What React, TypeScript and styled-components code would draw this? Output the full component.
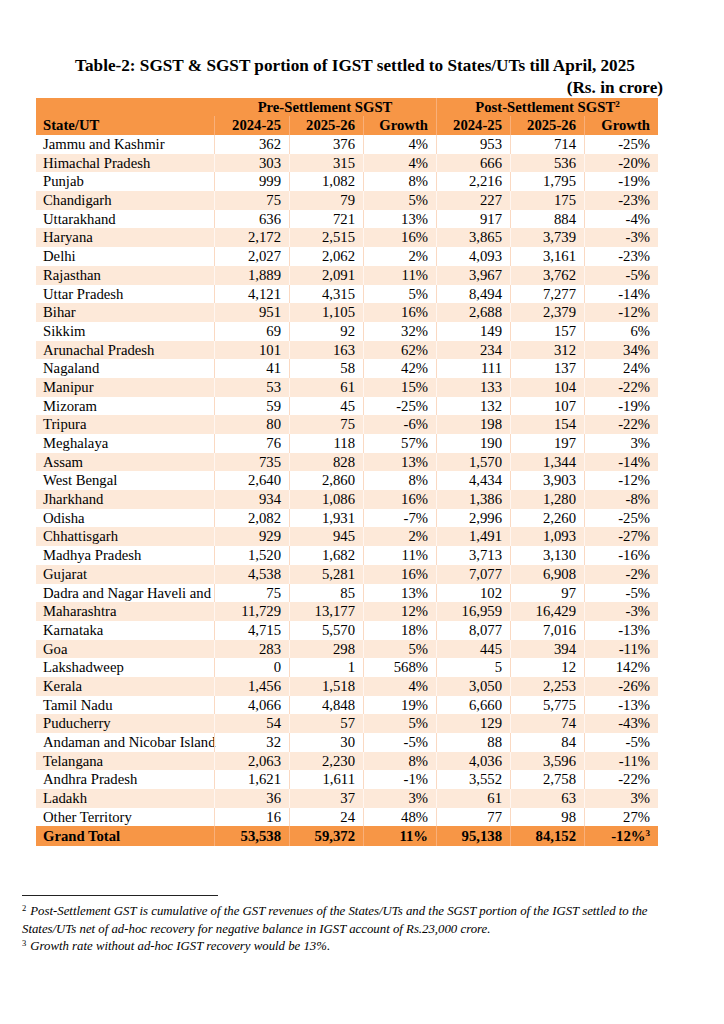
import React from "react";
import styled, { createGlobalStyle } from "styled-components";

const GlobalStyle = createGlobalStyle`
  html, body { margin: 0; padding: 0; background: #ffffff; }
  body { font-family: "Liberation Serif", "Times New Roman", serif; color: #000; }
`;

const ORANGE = "#F79646";
const PEACH = "#FDE9D9";
const COLS = "178px 75px 74px 73px 74px 74px 74px";

const Page = styled.div`
  width: 724px;
  min-height: 1024px;
  box-sizing: border-box;
  padding-top: 55px;
`;

const Title = styled.h1`
  margin: 0;
  font-size: 17.2px;
  line-height: 21.5px;
  font-weight: bold;
  text-align: center;
  padding-right: 14px;
`;

const Unit = styled.div`
  font-size: 17.2px;
  line-height: 21.5px;
  font-weight: bold;
  text-align: right;
  padding-right: 61px;
`;

const Table = styled.div`
  margin-left: 36px;
  width: 622px;
  font-size: 14.7px;
`;

const GroupRow = styled.div`
  display: grid;
  grid-template-columns: 178px 222px 222px;
  height: 18px;
  line-height: 18px;
  background: ${ORANGE};
  font-weight: bold;
`;

const GroupCell = styled.div<{ $sep?: boolean }>`
  text-align: center;
  border-left: ${(p) => (p.$sep ? "1px solid #F9B07A" : "none")};
  white-space: nowrap;
`;

const Row = styled.div<{ $bg: string; $line: string; $h: number; $bold?: boolean }>`
  display: grid;
  grid-template-columns: ${COLS};
  height: ${(p) => p.$h}px;
  line-height: ${(p) => p.$h}px;
  background: ${(p) => p.$bg};
  font-weight: ${(p) => (p.$bold ? "bold" : "normal")};
  & > div + div { border-left: 1px solid ${(p) => p.$line}; }
`;

const Cell = styled.div<{ $align?: "left" | "right" }>`
  text-align: ${(p) => p.$align ?? "right"};
  padding: ${(p) => (p.$align === "left" ? "0 0 0 7px" : "0 8px 0 0")};
  white-space: nowrap;
  overflow: visible;
`;

const Sup = styled.sup`
  font-size: 0.62em;
  line-height: 0;
  vertical-align: 0.55em;
`;

const Notes = styled.div`
  margin-top: 49px;
  padding-left: 22px;
  width: 630px;
`;

const Rule = styled.div`
  width: 196px;
  height: 1px;
  background: #222;
  margin-bottom: 7px;
`;

const Note = styled.p`
  margin: 0;
  font-size: 12.8px;
  line-height: 17.5px;
  font-style: italic;
`;

const NoteMark = styled.sup`
  font-style: normal;
  font-size: 8.5px;
  line-height: 0;
  vertical-align: 0.5em;
  margin-right: 4px;
`;

const rows: string[][] = [
  ["Jammu and Kashmir", "362", "376", "4%", "953", "714", "-25%"],
  ["Himachal Pradesh", "303", "315", "4%", "666", "536", "-20%"],
  ["Punjab", "999", "1,082", "8%", "2,216", "1,795", "-19%"],
  ["Chandigarh", "75", "79", "5%", "227", "175", "-23%"],
  ["Uttarakhand", "636", "721", "13%", "917", "884", "-4%"],
  ["Haryana", "2,172", "2,515", "16%", "3,865", "3,739", "-3%"],
  ["Delhi", "2,027", "2,062", "2%", "4,093", "3,161", "-23%"],
  ["Rajasthan", "1,889", "2,091", "11%", "3,967", "3,762", "-5%"],
  ["Uttar Pradesh", "4,121", "4,315", "5%", "8,494", "7,277", "-14%"],
  ["Bihar", "951", "1,105", "16%", "2,688", "2,379", "-12%"],
  ["Sikkim", "69", "92", "32%", "149", "157", "6%"],
  ["Arunachal Pradesh", "101", "163", "62%", "234", "312", "34%"],
  ["Nagaland", "41", "58", "42%", "111", "137", "24%"],
  ["Manipur", "53", "61", "15%", "133", "104", "-22%"],
  ["Mizoram", "59", "45", "-25%", "132", "107", "-19%"],
  ["Tripura", "80", "75", "-6%", "198", "154", "-22%"],
  ["Meghalaya", "76", "118", "57%", "190", "197", "3%"],
  ["Assam", "735", "828", "13%", "1,570", "1,344", "-14%"],
  ["West Bengal", "2,640", "2,860", "8%", "4,434", "3,903", "-12%"],
  ["Jharkhand", "934", "1,086", "16%", "1,386", "1,280", "-8%"],
  ["Odisha", "2,082", "1,931", "-7%", "2,996", "2,260", "-25%"],
  ["Chhattisgarh", "929", "945", "2%", "1,491", "1,093", "-27%"],
  ["Madhya Pradesh", "1,520", "1,682", "11%", "3,713", "3,130", "-16%"],
  ["Gujarat", "4,538", "5,281", "16%", "7,077", "6,908", "-2%"],
  ["Dadra and Nagar Haveli and", "75", "85", "13%", "102", "97", "-5%"],
  ["Maharashtra", "11,729", "13,177", "12%", "16,959", "16,429", "-3%"],
  ["Karnataka", "4,715", "5,570", "18%", "8,077", "7,016", "-13%"],
  ["Goa", "283", "298", "5%", "445", "394", "-11%"],
  ["Lakshadweep", "0", "1", "568%", "5", "12", "142%"],
  ["Kerala", "1,456", "1,518", "4%", "3,050", "2,253", "-26%"],
  ["Tamil Nadu", "4,066", "4,848", "19%", "6,660", "5,775", "-13%"],
  ["Puducherry", "54", "57", "5%", "129", "74", "-43%"],
  ["Andaman and Nicobar Island", "32", "30", "-5%", "88", "84", "-5%"],
  ["Telangana", "2,063", "2,230", "8%", "4,036", "3,596", "-11%"],
  ["Andhra Pradesh", "1,621", "1,611", "-1%", "3,552", "2,758", "-22%"],
  ["Ladakh", "36", "37", "3%", "61", "63", "3%"],
  ["Other Territory", "16", "24", "48%", "77", "98", "27%"],
];

const ROW_H = 18.7;

export default function App() {
  return (
    <>
      <GlobalStyle />
      <Page>
        <Title>Table-2: SGST &amp; SGST portion of IGST settled to States/UTs till April, 2025</Title>
        <Unit>(Rs. in crore)</Unit>
        <Table>
          <GroupRow>
            <GroupCell />
            <GroupCell>Pre-Settlement SGST</GroupCell>
            <GroupCell $sep>
              Post-Settlement SGST<Sup>2</Sup>
            </GroupCell>
          </GroupRow>
          <Row $bg={ORANGE} $line="#F9B07A" $h={19} $bold>
            <Cell $align="left">State/UT</Cell>
            <Cell>2024-25</Cell>
            <Cell>2025-26</Cell>
            <Cell>Growth</Cell>
            <Cell>2024-25</Cell>
            <Cell>2025-26</Cell>
            <Cell>Growth</Cell>
          </Row>
          {rows.map((r, i) => (
            <Row
              key={r[0]}
              $bg={i % 2 === 0 ? "#FFFFFF" : PEACH}
              $line={i % 2 === 0 ? "#FAD9C2" : "#FFF6F0"}
              $h={ROW_H}
            >
              {r.map((v, j) => (
                <Cell key={j} $align={j === 0 ? "left" : "right"}>
                  {v}
                </Cell>
              ))}
            </Row>
          ))}
          <Row $bg={ORANGE} $line="#F9B07A" $h={20} $bold>
            <Cell $align="left">Grand Total</Cell>
            <Cell>53,538</Cell>
            <Cell>59,372</Cell>
            <Cell>11%</Cell>
            <Cell>95,138</Cell>
            <Cell>84,152</Cell>
            <Cell>
              -12%<Sup>3</Sup>
            </Cell>
          </Row>
        </Table>
        <Notes>
          <Rule />
          <Note>
            <NoteMark>2</NoteMark>Post-Settlement GST is cumulative of the GST revenues of the States/UTs and the SGST
            portion of the IGST settled to the States/UTs net of ad-hoc recovery for negative balance in IGST account of
            Rs.23,000 crore.
          </Note>
          <Note>
            <NoteMark>3</NoteMark>Growth rate without ad-hoc IGST recovery would be 13%.
          </Note>
        </Notes>
      </Page>
    </>
  );
}
